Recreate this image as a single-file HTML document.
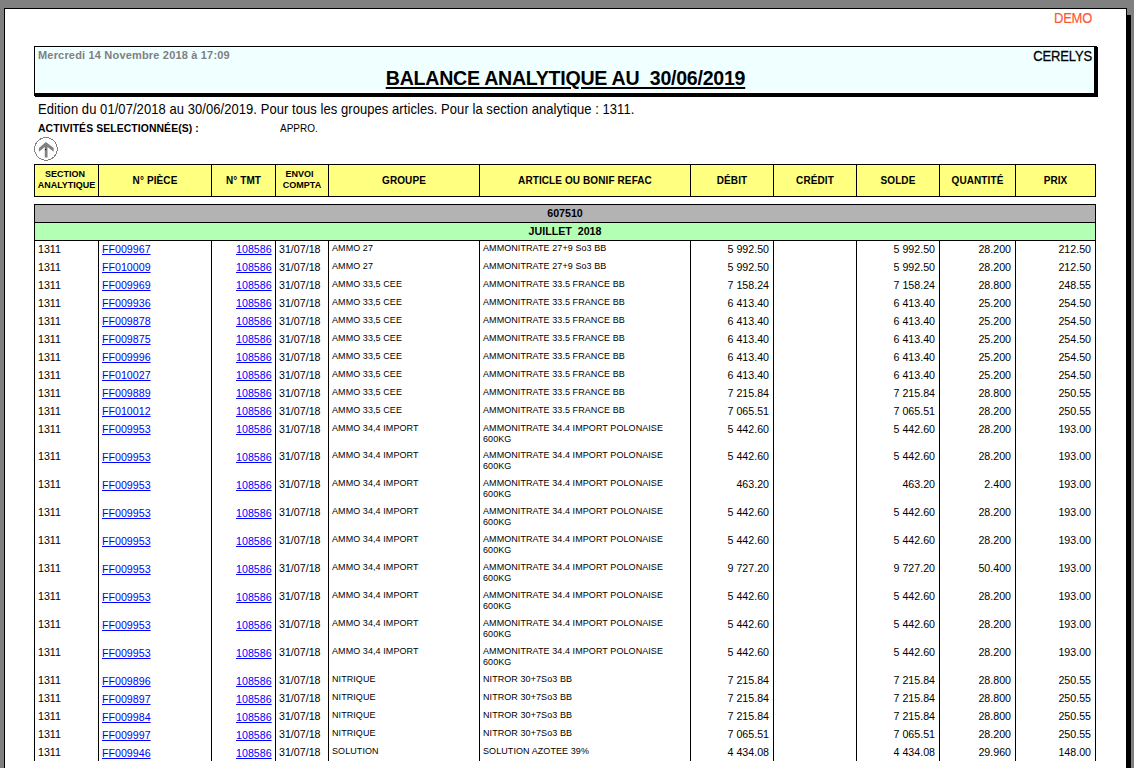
<!DOCTYPE html><html><head><meta charset="utf-8"><style>
*{margin:0;padding:0;box-sizing:border-box}
html,body{width:1134px;height:768px;overflow:hidden;background:#808080;font-family:"Liberation Sans",sans-serif;color:#000}
.a{position:absolute;white-space:nowrap}
.t{font-size:10.67px;line-height:12px}
.s{font-size:9px;line-height:9.8px;transform:translateY(1.3px) scaleY(1.1);transform-origin:0 0;letter-spacing:0.075px}
.l{color:#0000ff;text-decoration:underline;text-underline-offset:1px}
.r{text-align:right}
.c{text-align:center}
.b{font-weight:bold}
.vl{position:absolute;width:1px;background:#000}
.hl{position:absolute;height:1px;background:#000}
</style></head><body>
<div style="position:absolute;left:4px;top:8px;width:1123px;height:800px;background:#fff;border:1px solid #000"></div>
<div style="position:absolute;left:1127px;top:15px;width:4px;height:800px;background:#000"></div>
<div style="left:1000px;top:10px;width:92px;font-size:13px;line-height:16px;color:#ff5533;transform:scaleY(1.1);transform-origin:0 0;letter-spacing:-0.25px;-webkit-text-stroke:0.15px #ff5533" class="a r">DEMO</div>
<div style="position:absolute;left:34px;top:46px;width:1064px;height:51px;background:#000"></div>
<div style="position:absolute;left:35px;top:47px;width:1059px;height:46px;background:#fff"></div>
<div style="position:absolute;left:36px;top:48px;width:1057px;height:44px;background:#f0ffff"></div>
<div style="position:absolute;left:1097px;top:46px;width:1px;height:1px;background:#fff"></div>
<div style="position:absolute;left:34px;top:96px;width:1px;height:1px;background:#fff"></div>
<div style="left:38px;top:49px;font-size:11px;line-height:13px;font-weight:bold;color:#808080;letter-spacing:0.18px" class="a">Mercredi 14 Novembre 2018 à 17:09</div>
<div style="left:990px;top:48px;width:102px;font-size:13px;line-height:16px;transform:scaleY(1.1);transform-origin:0 0;-webkit-text-stroke:0.25px #000;letter-spacing:-0.15px" class="a r">CERELYS</div>
<div style="left:34px;top:67px;width:1063px;font-size:19.6px;line-height:22px;font-weight:bold;letter-spacing:-0.26px" class="a c"><span style="text-decoration:underline;text-decoration-thickness:2px;text-underline-offset:2px">BALANCE ANALYTIQUE AU &nbsp;30/06/2019</span></div>
<div style="left:38px;top:101px;font-size:13px;line-height:15px;letter-spacing:0.06px;transform:translateY(0.3px) scaleY(1.09);transform-origin:0 0" class="a">Edition du 01/07/2018 au 30/06/2019. Pour tous les groupes articles. Pour la section analytique : 1311.</div>
<div style="left:38px;top:123px;font-size:10.4px;line-height:12px;font-weight:bold;letter-spacing:0.1px" class="a">ACTIVITÉS SELECTIONNÉE(S) :</div>
<div style="left:280px;top:123px;font-size:10px;line-height:12px" class="a">APPRO.</div>
<svg style="position:absolute;left:33px;top:136px" width="26" height="26" viewBox="0 0 26 26">
<circle cx="12.9" cy="12.9" r="11.3" fill="none" stroke="#808080" stroke-width="1" shape-rendering="crispEdges"/>
<path d="M12.9 5.9 L20.7 11.9 L20.7 15.8 L14.5 10.9 L14.5 21.6 L11.8 21.6 L11.8 10.9 L5.9 15.8 L5.9 11.9 Z" fill="#808080"/>
<circle cx="12.6" cy="13.5" r="0.75" fill="#0000ff"/>
</svg>
<div style="position:absolute;left:34px;top:164px;width:1062px;height:33px;background:#ffff80;border:1px solid #000"></div>
<div style="position:absolute;left:98px;top:164px;width:1px;height:33px;background:#000"></div>
<div style="position:absolute;left:211px;top:164px;width:1px;height:33px;background:#000"></div>
<div style="position:absolute;left:275px;top:164px;width:1px;height:33px;background:#000"></div>
<div style="position:absolute;left:328px;top:164px;width:1px;height:33px;background:#000"></div>
<div style="position:absolute;left:479px;top:164px;width:1px;height:33px;background:#000"></div>
<div style="position:absolute;left:690px;top:164px;width:1px;height:33px;background:#000"></div>
<div style="position:absolute;left:773px;top:164px;width:1px;height:33px;background:#000"></div>
<div style="position:absolute;left:856px;top:164px;width:1px;height:33px;background:#000"></div>
<div style="position:absolute;left:939px;top:164px;width:1px;height:33px;background:#000"></div>
<div style="position:absolute;left:1015px;top:164px;width:1px;height:33px;background:#000"></div>
<div style="left:35px;top:169px;width:63px;font-size:9px;line-height:9.6px;font-weight:bold;transform:translateY(0.5px) scaleY(1.1);transform-origin:0 0" class="a c"><span style="position:relative;left:-1.5px">SECTION</span><br>ANALYTIQUE</div>
<div style="left:99px;top:175px;width:112px;font-size:10px;line-height:12px;font-weight:bold;letter-spacing:0.1px" class="a c">N° PIÈCE</div>
<div style="left:212px;top:175px;width:63px;font-size:10px;line-height:12px;font-weight:bold;letter-spacing:0.1px" class="a c">N° TMT</div>
<div style="left:276px;top:169px;width:52px;font-size:9px;line-height:9.6px;font-weight:bold;transform:translateY(0.5px) scaleY(1.1);transform-origin:0 0" class="a c"><span style="position:relative;left:-2.4px">ENVOI</span><br>COMPTA</div>
<div style="left:329px;top:175px;width:150px;font-size:10px;line-height:12px;font-weight:bold;letter-spacing:0.1px" class="a c">GROUPE</div>
<div style="left:480px;top:175px;width:210px;font-size:10px;line-height:12px;font-weight:bold;letter-spacing:0.1px" class="a c">ARTICLE OU BONIF REFAC</div>
<div style="left:691px;top:175px;width:82px;font-size:10px;line-height:12px;font-weight:bold;letter-spacing:0.1px" class="a c">DÉBIT</div>
<div style="left:774px;top:175px;width:82px;font-size:10px;line-height:12px;font-weight:bold;letter-spacing:0.1px" class="a c">CRÉDIT</div>
<div style="left:857px;top:175px;width:82px;font-size:10px;line-height:12px;font-weight:bold;letter-spacing:0.1px" class="a c">SOLDE</div>
<div style="left:940px;top:175px;width:75px;font-size:10px;line-height:12px;font-weight:bold;letter-spacing:0.1px" class="a c">QUANTITÉ</div>
<div style="left:1016px;top:175px;width:79px;font-size:10px;line-height:12px;font-weight:bold;letter-spacing:0.1px" class="a c">PRIX</div>
<div style="position:absolute;left:34px;top:204px;width:1062px;height:19px;background:#b3b3b3;border:1px solid #000"></div>
<div style="left:34px;top:207px;width:1062px;font-weight:bold" class="a c t">607510</div>
<div style="position:absolute;left:34px;top:222px;width:1062px;height:19px;background:#b3ffb3;border:1px solid #000"></div>
<div style="left:34px;top:225px;width:1062px;font-weight:bold" class="a c t">JUILLET&nbsp; 2018</div>
<div style="position:absolute;left:34px;top:240px;width:1px;height:521px;background:#000"></div>
<div style="position:absolute;left:98px;top:240px;width:1px;height:521px;background:#000"></div>
<div style="position:absolute;left:211px;top:240px;width:1px;height:521px;background:#000"></div>
<div style="position:absolute;left:275px;top:240px;width:1px;height:521px;background:#000"></div>
<div style="position:absolute;left:328px;top:240px;width:1px;height:521px;background:#000"></div>
<div style="position:absolute;left:479px;top:240px;width:1px;height:521px;background:#000"></div>
<div style="position:absolute;left:690px;top:240px;width:1px;height:521px;background:#000"></div>
<div style="position:absolute;left:773px;top:240px;width:1px;height:521px;background:#000"></div>
<div style="position:absolute;left:856px;top:240px;width:1px;height:521px;background:#000"></div>
<div style="position:absolute;left:939px;top:240px;width:1px;height:521px;background:#000"></div>
<div style="position:absolute;left:1015px;top:240px;width:1px;height:521px;background:#000"></div>
<div style="position:absolute;left:1095px;top:240px;width:1px;height:521px;background:#000"></div>
<div style="left:38px;top:243px" class="a t">1311</div>
<div style="left:102px;top:243px" class="a t l">FF009967</div>
<div style="left:211px;top:243px;width:60.6px" class="a t r l"><span>108586</span></div>
<div style="left:279px;top:243px" class="a t">31/07/18</div>
<div style="left:332px;top:242px" class="a s">AMMO 27</div>
<div style="left:483px;top:242px" class="a s">AMMONITRATE 27+9 So3 BB</div>
<div style="left:690px;top:243px;width:79px" class="a t r">5 992.50</div>
<div style="left:856px;top:243px;width:79px" class="a t r">5 992.50</div>
<div style="left:939px;top:243px;width:72px" class="a t r">28.200</div>
<div style="left:1015px;top:243px;width:76px" class="a t r">212.50</div>
<div style="left:38px;top:261px" class="a t">1311</div>
<div style="left:102px;top:261px" class="a t l">FF010009</div>
<div style="left:211px;top:261px;width:60.6px" class="a t r l"><span>108586</span></div>
<div style="left:279px;top:261px" class="a t">31/07/18</div>
<div style="left:332px;top:260px" class="a s">AMMO 27</div>
<div style="left:483px;top:260px" class="a s">AMMONITRATE 27+9 So3 BB</div>
<div style="left:690px;top:261px;width:79px" class="a t r">5 992.50</div>
<div style="left:856px;top:261px;width:79px" class="a t r">5 992.50</div>
<div style="left:939px;top:261px;width:72px" class="a t r">28.200</div>
<div style="left:1015px;top:261px;width:76px" class="a t r">212.50</div>
<div style="left:38px;top:279px" class="a t">1311</div>
<div style="left:102px;top:279px" class="a t l">FF009969</div>
<div style="left:211px;top:279px;width:60.6px" class="a t r l"><span>108586</span></div>
<div style="left:279px;top:279px" class="a t">31/07/18</div>
<div style="left:332px;top:278px" class="a s">AMMO 33,5 CEE</div>
<div style="left:483px;top:278px" class="a s">AMMONITRATE 33.5 FRANCE BB</div>
<div style="left:690px;top:279px;width:79px" class="a t r">7 158.24</div>
<div style="left:856px;top:279px;width:79px" class="a t r">7 158.24</div>
<div style="left:939px;top:279px;width:72px" class="a t r">28.800</div>
<div style="left:1015px;top:279px;width:76px" class="a t r">248.55</div>
<div style="left:38px;top:297px" class="a t">1311</div>
<div style="left:102px;top:297px" class="a t l">FF009936</div>
<div style="left:211px;top:297px;width:60.6px" class="a t r l"><span>108586</span></div>
<div style="left:279px;top:297px" class="a t">31/07/18</div>
<div style="left:332px;top:296px" class="a s">AMMO 33,5 CEE</div>
<div style="left:483px;top:296px" class="a s">AMMONITRATE 33.5 FRANCE BB</div>
<div style="left:690px;top:297px;width:79px" class="a t r">6 413.40</div>
<div style="left:856px;top:297px;width:79px" class="a t r">6 413.40</div>
<div style="left:939px;top:297px;width:72px" class="a t r">25.200</div>
<div style="left:1015px;top:297px;width:76px" class="a t r">254.50</div>
<div style="left:38px;top:315px" class="a t">1311</div>
<div style="left:102px;top:315px" class="a t l">FF009878</div>
<div style="left:211px;top:315px;width:60.6px" class="a t r l"><span>108586</span></div>
<div style="left:279px;top:315px" class="a t">31/07/18</div>
<div style="left:332px;top:314px" class="a s">AMMO 33,5 CEE</div>
<div style="left:483px;top:314px" class="a s">AMMONITRATE 33.5 FRANCE BB</div>
<div style="left:690px;top:315px;width:79px" class="a t r">6 413.40</div>
<div style="left:856px;top:315px;width:79px" class="a t r">6 413.40</div>
<div style="left:939px;top:315px;width:72px" class="a t r">25.200</div>
<div style="left:1015px;top:315px;width:76px" class="a t r">254.50</div>
<div style="left:38px;top:333px" class="a t">1311</div>
<div style="left:102px;top:333px" class="a t l">FF009875</div>
<div style="left:211px;top:333px;width:60.6px" class="a t r l"><span>108586</span></div>
<div style="left:279px;top:333px" class="a t">31/07/18</div>
<div style="left:332px;top:332px" class="a s">AMMO 33,5 CEE</div>
<div style="left:483px;top:332px" class="a s">AMMONITRATE 33.5 FRANCE BB</div>
<div style="left:690px;top:333px;width:79px" class="a t r">6 413.40</div>
<div style="left:856px;top:333px;width:79px" class="a t r">6 413.40</div>
<div style="left:939px;top:333px;width:72px" class="a t r">25.200</div>
<div style="left:1015px;top:333px;width:76px" class="a t r">254.50</div>
<div style="left:38px;top:351px" class="a t">1311</div>
<div style="left:102px;top:351px" class="a t l">FF009996</div>
<div style="left:211px;top:351px;width:60.6px" class="a t r l"><span>108586</span></div>
<div style="left:279px;top:351px" class="a t">31/07/18</div>
<div style="left:332px;top:350px" class="a s">AMMO 33,5 CEE</div>
<div style="left:483px;top:350px" class="a s">AMMONITRATE 33.5 FRANCE BB</div>
<div style="left:690px;top:351px;width:79px" class="a t r">6 413.40</div>
<div style="left:856px;top:351px;width:79px" class="a t r">6 413.40</div>
<div style="left:939px;top:351px;width:72px" class="a t r">25.200</div>
<div style="left:1015px;top:351px;width:76px" class="a t r">254.50</div>
<div style="left:38px;top:369px" class="a t">1311</div>
<div style="left:102px;top:369px" class="a t l">FF010027</div>
<div style="left:211px;top:369px;width:60.6px" class="a t r l"><span>108586</span></div>
<div style="left:279px;top:369px" class="a t">31/07/18</div>
<div style="left:332px;top:368px" class="a s">AMMO 33,5 CEE</div>
<div style="left:483px;top:368px" class="a s">AMMONITRATE 33.5 FRANCE BB</div>
<div style="left:690px;top:369px;width:79px" class="a t r">6 413.40</div>
<div style="left:856px;top:369px;width:79px" class="a t r">6 413.40</div>
<div style="left:939px;top:369px;width:72px" class="a t r">25.200</div>
<div style="left:1015px;top:369px;width:76px" class="a t r">254.50</div>
<div style="left:38px;top:387px" class="a t">1311</div>
<div style="left:102px;top:387px" class="a t l">FF009889</div>
<div style="left:211px;top:387px;width:60.6px" class="a t r l"><span>108586</span></div>
<div style="left:279px;top:387px" class="a t">31/07/18</div>
<div style="left:332px;top:386px" class="a s">AMMO 33,5 CEE</div>
<div style="left:483px;top:386px" class="a s">AMMONITRATE 33.5 FRANCE BB</div>
<div style="left:690px;top:387px;width:79px" class="a t r">7 215.84</div>
<div style="left:856px;top:387px;width:79px" class="a t r">7 215.84</div>
<div style="left:939px;top:387px;width:72px" class="a t r">28.800</div>
<div style="left:1015px;top:387px;width:76px" class="a t r">250.55</div>
<div style="left:38px;top:405px" class="a t">1311</div>
<div style="left:102px;top:405px" class="a t l">FF010012</div>
<div style="left:211px;top:405px;width:60.6px" class="a t r l"><span>108586</span></div>
<div style="left:279px;top:405px" class="a t">31/07/18</div>
<div style="left:332px;top:404px" class="a s">AMMO 33,5 CEE</div>
<div style="left:483px;top:404px" class="a s">AMMONITRATE 33.5 FRANCE BB</div>
<div style="left:690px;top:405px;width:79px" class="a t r">7 065.51</div>
<div style="left:856px;top:405px;width:79px" class="a t r">7 065.51</div>
<div style="left:939px;top:405px;width:72px" class="a t r">28.200</div>
<div style="left:1015px;top:405px;width:76px" class="a t r">250.55</div>
<div style="left:38px;top:423px" class="a t">1311</div>
<div style="left:102px;top:423px" class="a t l">FF009953</div>
<div style="left:211px;top:423px;width:60.6px" class="a t r l"><span>108586</span></div>
<div style="left:279px;top:423px" class="a t">31/07/18</div>
<div style="left:332px;top:422px" class="a s">AMMO 34,4 IMPORT</div>
<div style="left:483px;top:422px" class="a s">AMMONITRATE 34.4 IMPORT POLONAISE<br>600KG</div>
<div style="left:690px;top:423px;width:79px" class="a t r">5 442.60</div>
<div style="left:856px;top:423px;width:79px" class="a t r">5 442.60</div>
<div style="left:939px;top:423px;width:72px" class="a t r">28.200</div>
<div style="left:1015px;top:423px;width:76px" class="a t r">193.00</div>
<div style="left:38px;top:450px" class="a t">1311</div>
<div style="left:102px;top:451px" class="a t l">FF009953</div>
<div style="left:211px;top:451px;width:60.6px" class="a t r l"><span>108586</span></div>
<div style="left:279px;top:450px" class="a t">31/07/18</div>
<div style="left:332px;top:449px" class="a s">AMMO 34,4 IMPORT</div>
<div style="left:483px;top:449px" class="a s">AMMONITRATE 34.4 IMPORT POLONAISE<br>600KG</div>
<div style="left:690px;top:450px;width:79px" class="a t r">5 442.60</div>
<div style="left:856px;top:450px;width:79px" class="a t r">5 442.60</div>
<div style="left:939px;top:450px;width:72px" class="a t r">28.200</div>
<div style="left:1015px;top:450px;width:76px" class="a t r">193.00</div>
<div style="left:38px;top:478px" class="a t">1311</div>
<div style="left:102px;top:479px" class="a t l">FF009953</div>
<div style="left:211px;top:479px;width:60.6px" class="a t r l"><span>108586</span></div>
<div style="left:279px;top:478px" class="a t">31/07/18</div>
<div style="left:332px;top:477px" class="a s">AMMO 34,4 IMPORT</div>
<div style="left:483px;top:477px" class="a s">AMMONITRATE 34.4 IMPORT POLONAISE<br>600KG</div>
<div style="left:690px;top:478px;width:79px" class="a t r">463.20</div>
<div style="left:856px;top:478px;width:79px" class="a t r">463.20</div>
<div style="left:939px;top:478px;width:72px" class="a t r">2.400</div>
<div style="left:1015px;top:478px;width:76px" class="a t r">193.00</div>
<div style="left:38px;top:506px" class="a t">1311</div>
<div style="left:102px;top:507px" class="a t l">FF009953</div>
<div style="left:211px;top:507px;width:60.6px" class="a t r l"><span>108586</span></div>
<div style="left:279px;top:506px" class="a t">31/07/18</div>
<div style="left:332px;top:505px" class="a s">AMMO 34,4 IMPORT</div>
<div style="left:483px;top:505px" class="a s">AMMONITRATE 34.4 IMPORT POLONAISE<br>600KG</div>
<div style="left:690px;top:506px;width:79px" class="a t r">5 442.60</div>
<div style="left:856px;top:506px;width:79px" class="a t r">5 442.60</div>
<div style="left:939px;top:506px;width:72px" class="a t r">28.200</div>
<div style="left:1015px;top:506px;width:76px" class="a t r">193.00</div>
<div style="left:38px;top:534px" class="a t">1311</div>
<div style="left:102px;top:535px" class="a t l">FF009953</div>
<div style="left:211px;top:535px;width:60.6px" class="a t r l"><span>108586</span></div>
<div style="left:279px;top:534px" class="a t">31/07/18</div>
<div style="left:332px;top:533px" class="a s">AMMO 34,4 IMPORT</div>
<div style="left:483px;top:533px" class="a s">AMMONITRATE 34.4 IMPORT POLONAISE<br>600KG</div>
<div style="left:690px;top:534px;width:79px" class="a t r">5 442.60</div>
<div style="left:856px;top:534px;width:79px" class="a t r">5 442.60</div>
<div style="left:939px;top:534px;width:72px" class="a t r">28.200</div>
<div style="left:1015px;top:534px;width:76px" class="a t r">193.00</div>
<div style="left:38px;top:562px" class="a t">1311</div>
<div style="left:102px;top:563px" class="a t l">FF009953</div>
<div style="left:211px;top:563px;width:60.6px" class="a t r l"><span>108586</span></div>
<div style="left:279px;top:562px" class="a t">31/07/18</div>
<div style="left:332px;top:561px" class="a s">AMMO 34,4 IMPORT</div>
<div style="left:483px;top:561px" class="a s">AMMONITRATE 34.4 IMPORT POLONAISE<br>600KG</div>
<div style="left:690px;top:562px;width:79px" class="a t r">9 727.20</div>
<div style="left:856px;top:562px;width:79px" class="a t r">9 727.20</div>
<div style="left:939px;top:562px;width:72px" class="a t r">50.400</div>
<div style="left:1015px;top:562px;width:76px" class="a t r">193.00</div>
<div style="left:38px;top:590px" class="a t">1311</div>
<div style="left:102px;top:591px" class="a t l">FF009953</div>
<div style="left:211px;top:591px;width:60.6px" class="a t r l"><span>108586</span></div>
<div style="left:279px;top:590px" class="a t">31/07/18</div>
<div style="left:332px;top:589px" class="a s">AMMO 34,4 IMPORT</div>
<div style="left:483px;top:589px" class="a s">AMMONITRATE 34.4 IMPORT POLONAISE<br>600KG</div>
<div style="left:690px;top:590px;width:79px" class="a t r">5 442.60</div>
<div style="left:856px;top:590px;width:79px" class="a t r">5 442.60</div>
<div style="left:939px;top:590px;width:72px" class="a t r">28.200</div>
<div style="left:1015px;top:590px;width:76px" class="a t r">193.00</div>
<div style="left:38px;top:618px" class="a t">1311</div>
<div style="left:102px;top:619px" class="a t l">FF009953</div>
<div style="left:211px;top:619px;width:60.6px" class="a t r l"><span>108586</span></div>
<div style="left:279px;top:618px" class="a t">31/07/18</div>
<div style="left:332px;top:617px" class="a s">AMMO 34,4 IMPORT</div>
<div style="left:483px;top:617px" class="a s">AMMONITRATE 34.4 IMPORT POLONAISE<br>600KG</div>
<div style="left:690px;top:618px;width:79px" class="a t r">5 442.60</div>
<div style="left:856px;top:618px;width:79px" class="a t r">5 442.60</div>
<div style="left:939px;top:618px;width:72px" class="a t r">28.200</div>
<div style="left:1015px;top:618px;width:76px" class="a t r">193.00</div>
<div style="left:38px;top:646px" class="a t">1311</div>
<div style="left:102px;top:647px" class="a t l">FF009953</div>
<div style="left:211px;top:647px;width:60.6px" class="a t r l"><span>108586</span></div>
<div style="left:279px;top:646px" class="a t">31/07/18</div>
<div style="left:332px;top:645px" class="a s">AMMO 34,4 IMPORT</div>
<div style="left:483px;top:645px" class="a s">AMMONITRATE 34.4 IMPORT POLONAISE<br>600KG</div>
<div style="left:690px;top:646px;width:79px" class="a t r">5 442.60</div>
<div style="left:856px;top:646px;width:79px" class="a t r">5 442.60</div>
<div style="left:939px;top:646px;width:72px" class="a t r">28.200</div>
<div style="left:1015px;top:646px;width:76px" class="a t r">193.00</div>
<div style="left:38px;top:674px" class="a t">1311</div>
<div style="left:102px;top:675px" class="a t l">FF009896</div>
<div style="left:211px;top:675px;width:60.6px" class="a t r l"><span>108586</span></div>
<div style="left:279px;top:674px" class="a t">31/07/18</div>
<div style="left:332px;top:673px" class="a s">NITRIQUE</div>
<div style="left:483px;top:673px" class="a s">NITROR 30+7So3 BB</div>
<div style="left:690px;top:674px;width:79px" class="a t r">7 215.84</div>
<div style="left:856px;top:674px;width:79px" class="a t r">7 215.84</div>
<div style="left:939px;top:674px;width:72px" class="a t r">28.800</div>
<div style="left:1015px;top:674px;width:76px" class="a t r">250.55</div>
<div style="left:38px;top:692px" class="a t">1311</div>
<div style="left:102px;top:693px" class="a t l">FF009897</div>
<div style="left:211px;top:693px;width:60.6px" class="a t r l"><span>108586</span></div>
<div style="left:279px;top:692px" class="a t">31/07/18</div>
<div style="left:332px;top:691px" class="a s">NITRIQUE</div>
<div style="left:483px;top:691px" class="a s">NITROR 30+7So3 BB</div>
<div style="left:690px;top:692px;width:79px" class="a t r">7 215.84</div>
<div style="left:856px;top:692px;width:79px" class="a t r">7 215.84</div>
<div style="left:939px;top:692px;width:72px" class="a t r">28.800</div>
<div style="left:1015px;top:692px;width:76px" class="a t r">250.55</div>
<div style="left:38px;top:710px" class="a t">1311</div>
<div style="left:102px;top:711px" class="a t l">FF009984</div>
<div style="left:211px;top:711px;width:60.6px" class="a t r l"><span>108586</span></div>
<div style="left:279px;top:710px" class="a t">31/07/18</div>
<div style="left:332px;top:709px" class="a s">NITRIQUE</div>
<div style="left:483px;top:709px" class="a s">NITROR 30+7So3 BB</div>
<div style="left:690px;top:710px;width:79px" class="a t r">7 215.84</div>
<div style="left:856px;top:710px;width:79px" class="a t r">7 215.84</div>
<div style="left:939px;top:710px;width:72px" class="a t r">28.800</div>
<div style="left:1015px;top:710px;width:76px" class="a t r">250.55</div>
<div style="left:38px;top:728px" class="a t">1311</div>
<div style="left:102px;top:729px" class="a t l">FF009997</div>
<div style="left:211px;top:729px;width:60.6px" class="a t r l"><span>108586</span></div>
<div style="left:279px;top:728px" class="a t">31/07/18</div>
<div style="left:332px;top:727px" class="a s">NITRIQUE</div>
<div style="left:483px;top:727px" class="a s">NITROR 30+7So3 BB</div>
<div style="left:690px;top:728px;width:79px" class="a t r">7 065.51</div>
<div style="left:856px;top:728px;width:79px" class="a t r">7 065.51</div>
<div style="left:939px;top:728px;width:72px" class="a t r">28.200</div>
<div style="left:1015px;top:728px;width:76px" class="a t r">250.55</div>
<div style="left:38px;top:746px" class="a t">1311</div>
<div style="left:102px;top:747px" class="a t l">FF009946</div>
<div style="left:211px;top:747px;width:60.6px" class="a t r l"><span>108586</span></div>
<div style="left:279px;top:746px" class="a t">31/07/18</div>
<div style="left:332px;top:745px" class="a s">SOLUTION</div>
<div style="left:483px;top:745px" class="a s">SOLUTION AZOTEE 39%</div>
<div style="left:690px;top:746px;width:79px" class="a t r">4 434.08</div>
<div style="left:856px;top:746px;width:79px" class="a t r">4 434.08</div>
<div style="left:939px;top:746px;width:72px" class="a t r">29.960</div>
<div style="left:1015px;top:746px;width:76px" class="a t r">148.00</div>
</body></html>
